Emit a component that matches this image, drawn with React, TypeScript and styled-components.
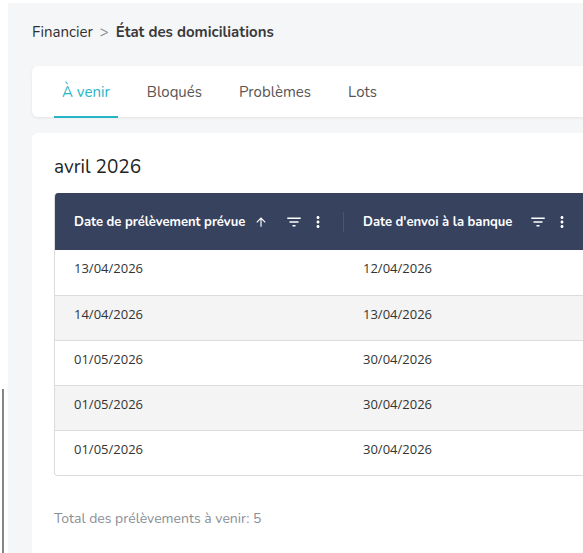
import React from "react";
import styled, { createGlobalStyle } from "styled-components";

const GlobalStyle = createGlobalStyle`
  html, body {
    margin: 0;
    padding: 0;
    background: #ffffff;
    overflow: hidden;
  }
  body {
    font-family: "Nunito", Lato, "Noto Sans", sans-serif;
    color: #333;
  }
`;

const Shell = styled.div`
  display: flex;
  min-height: 553px;
  padding-top: 3px;
  box-sizing: border-box;
`;

const SideRail = styled.aside`
  width: 8px;
  flex: none;
  background: #ffffff;
  display: flex;
  flex-direction: column;
`;

const RailThumb = styled.div`
  margin: 386px 0 0 2px;
  width: 2px;
  flex: 1;
  background: #858585;
`;

const Main = styled.main`
  flex: none;
  width: 600px;
  background: #f5f6f8;
  padding: 19px 0 0 24px;
  box-sizing: border-box;
`;

const Crumbs = styled.nav`
  display: flex;
  align-items: center;
  gap: 7px;
  font-size: 15px;
  color: #2f2f2f;
  height: 20px;
`;

const CrumbSep = styled.span`
  color: #8a8a8a;
`;

const CrumbCurrent = styled.span`
  font-weight: 700;
  color: #3a3a3a;
`;

const TabsCard = styled.div`
  margin-top: 24px;
  background: #fff;
  border-radius: 6px;
  box-shadow: 0 1px 3px rgba(0, 0, 0, 0.08);
  display: flex;
  padding-left: 22px;
  height: 51px;
`;

const Tab = styled.div<{ $active?: boolean }>`
  display: flex;
  align-items: center;
  padding: 2px 8px 0;
  margin-right: 21px;
  font-size: 15px;
  color: ${(p) => (p.$active ? "#27b4c6" : "#5a5454")};
  border-bottom: 2px solid ${(p) => (p.$active ? "#27b4c6" : "transparent")};
  margin-bottom: -1px;
`;

const Card = styled.section`
  margin-top: 16px;
  background: #fff;
  border-radius: 6px 0 0 0;
  padding: 21px 0 40px 22px;
  min-height: 440px;
  box-sizing: border-box;
`;

const MonthTitle = styled.h2`
  margin: 0 0 13px;
  font-size: 19px;
  font-weight: 400;
  color: #222;
  line-height: 26px;
`;

const Table = styled.div`
  border-left: 1px solid #dcdcdc;
  border-bottom: 1px solid #dcdcdc;
  border-radius: 4px 0 0 4px;
  overflow: hidden;
`;

const HeadRow = styled.div`
  display: grid;
  grid-template-columns: 288px 244px;
  height: 57px;
  background: #37425f;
  color: #fff;
`;

const HeadCell = styled.div<{ $divider?: boolean }>`
  display: flex;
  align-items: center;
  padding: 0 16px 0 19px;
  font-size: 13px;
  font-weight: 700;
  position: relative;
  ${(p) =>
    p.$divider &&
    `padding-left: 20px;
    &::before {
      content: "";
      position: absolute;
      left: 0;
      top: 19px;
      height: 20px;
      width: 1px;
      background: #4b5572;
    }`}
`;

const HeadLabel = styled.span`
  white-space: nowrap;
`;

const SortIcon = styled.svg`
  margin-left: 9px;
  flex: none;
`;

const Spacer = styled.div`
  flex: 1;
`;

const HeadIcons = styled.div`
  display: flex;
  gap: 6px;
`;

const BodyRow = styled.div<{ $shade?: boolean }>`
  display: grid;
  grid-template-columns: 288px 244px;
  height: 45px;
  box-sizing: border-box;
  background: ${(p) => (p.$shade ? "#f4f4f4" : "#fff")};
  & + & {
    border-top: 1px solid #dcdcdc;
  }
`;

const Cell = styled.div<{ $second?: boolean }>`
  padding: 9px ${(p) => (p.$second ? "20px" : "19px")} 0;
  font-family: "Open Sans", "Noto Sans", sans-serif;
  font-size: 13px;
  color: #333;
`;

const Total = styled.p`
  margin: 33px 0 0;
  font-size: 14px;
  color: #8a8f96;
`;

const FilterIcon = () => (
  <svg width="18" height="18" viewBox="0 0 24 24" fill="#fff">
    <path d="M10 18h4v-2h-4v2zM3 6v2h18V6H3zm3 7h12v-2H6v2z" />
  </svg>
);

const MoreIcon = () => (
  <svg width="18" height="18" viewBox="0 0 24 24" fill="#fff">
    <path d="M12 8c1.1 0 2-.9 2-2s-.9-2-2-2-2 .9-2 2 .9 2 2 2zm0 2c-1.1 0-2 .9-2 2s.9 2 2 2 2-.9 2-2-.9-2-2-2zm0 6c-1.1 0-2 .9-2 2s.9 2 2 2 2-.9 2-2-.9-2-2-2z" />
  </svg>
);

const rows = [
  ["13/04/2026", "12/04/2026"],
  ["14/04/2026", "13/04/2026"],
  ["01/05/2026", "30/04/2026"],
  ["01/05/2026", "30/04/2026"],
  ["01/05/2026", "30/04/2026"],
];

const tabs = ["À venir", "Bloqués", "Problèmes", "Lots"];

export default function App() {
  return (
    <>
      <GlobalStyle />
      <Shell>
        <SideRail>
          <RailThumb />
        </SideRail>
        <Main>
          <Crumbs>
            <span>Financier</span>
            <CrumbSep>&gt;</CrumbSep>
            <CrumbCurrent>État des domiciliations</CrumbCurrent>
          </Crumbs>
          <TabsCard>
            {tabs.map((t, i) => (
              <Tab key={t} $active={i === 0}>
                {t}
              </Tab>
            ))}
          </TabsCard>
          <Card>
            <MonthTitle>avril 2026</MonthTitle>
            <Table>
              <HeadRow>
                <HeadCell>
                  <HeadLabel>Date de prélèvement prévue</HeadLabel>
                  <SortIcon width="14" height="14" viewBox="0 0 24 24" fill="#fff">
                    <path d="M4 12l1.41 1.41L11 7.83V20h2V7.83l5.58 5.59L20 12l-8-8-8 8z" />
                  </SortIcon>
                  <Spacer />
                  <HeadIcons>
                    <FilterIcon />
                    <MoreIcon />
                  </HeadIcons>
                </HeadCell>
                <HeadCell $divider>
                  <HeadLabel>Date d'envoi à la banque</HeadLabel>
                  <Spacer />
                  <HeadIcons>
                    <FilterIcon />
                    <MoreIcon />
                  </HeadIcons>
                </HeadCell>
              </HeadRow>
              {rows.map((r, i) => (
                <BodyRow key={i} $shade={i % 2 === 1}>
                  <Cell>{r[0]}</Cell>
                  <Cell $second>{r[1]}</Cell>
                </BodyRow>
              ))}
            </Table>
            <Total>Total des prélèvements à venir: 5</Total>
          </Card>
        </Main>
      </Shell>
    </>
  );
}
